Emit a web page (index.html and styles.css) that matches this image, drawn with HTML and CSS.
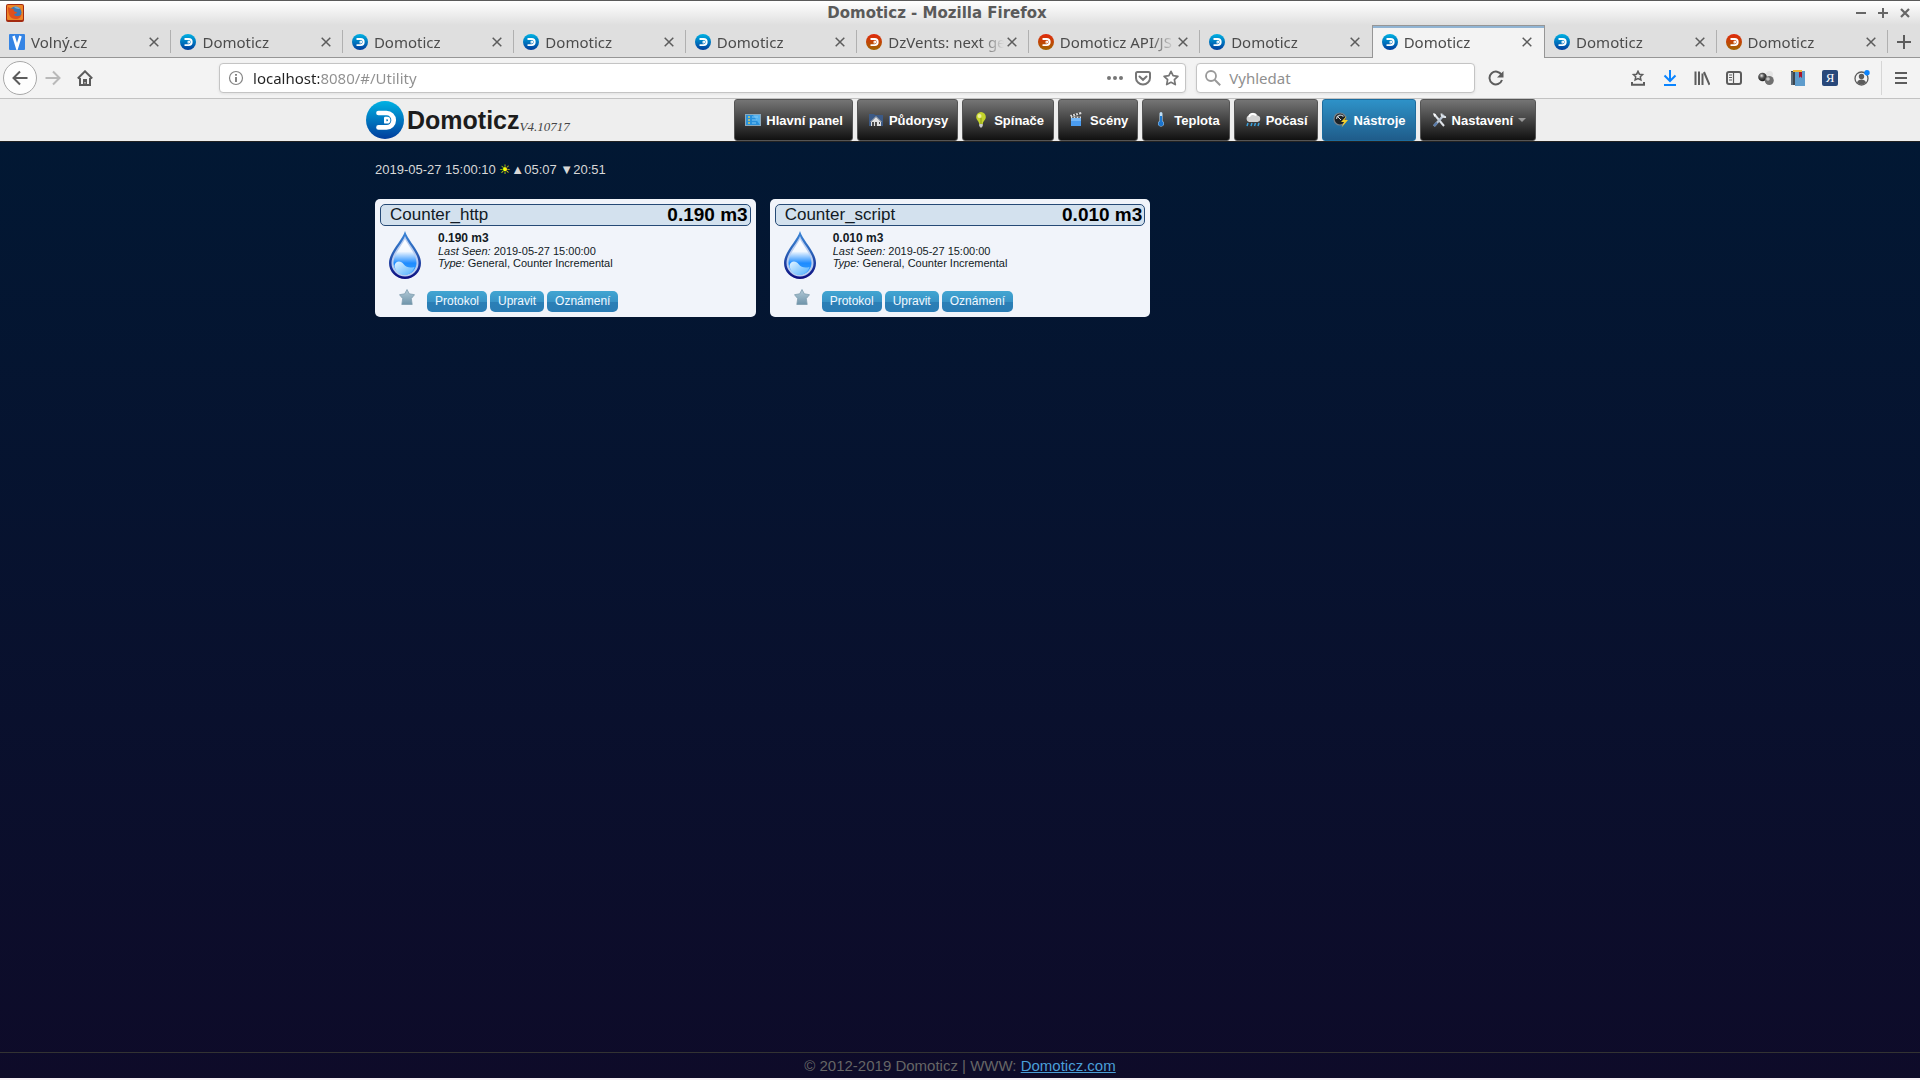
FILE: index.html
```html
<!DOCTYPE html>
<html lang="cs">
<head>
    <meta charset="UTF-8">
    <meta name="viewport" content="width=device-width, initial-scale=1.0">
    <title>Domoticz</title>
    <link rel="stylesheet" href="styles.css">
</head>
<body>
    <!-- Shared icons -->
    <svg class="sprite" width="0" height="0" aria-hidden="true">
        <defs>
            <linearGradient id="blueFill" x1="0" y1="0" x2="0" y2="1"><stop offset="0" stop-color="#00b2e3"/><stop offset="1" stop-color="#003c9c"/></linearGradient>
            <linearGradient id="redFill" x1="0" y1="0" x2="0" y2="1"><stop offset="0" stop-color="#e2280c"/><stop offset="1" stop-color="#a06400"/></linearGradient>
            <linearGradient id="dropRim" x1="0" y1="0" x2="0" y2="1"><stop offset="0" stop-color="#3a86d8"/><stop offset="0.45" stop-color="#2b62b8"/><stop offset="1" stop-color="#0c0c80"/></linearGradient>
            <linearGradient id="dropFill" x1="0" y1="0" x2="0" y2="1"><stop offset="0" stop-color="#ffffff"/><stop offset="0.35" stop-color="#f2f8ff"/><stop offset="0.68" stop-color="#1e8cff"/><stop offset="1" stop-color="#35a0ff"/></linearGradient>
            <linearGradient id="waveFill" x1="0" y1="0" x2="1" y2="1"><stop offset="0" stop-color="#e4f4ff"/><stop offset="1" stop-color="#4fb0ff"/></linearGradient>
            <linearGradient id="starFill" x1="0" y1="0" x2="0" y2="1"><stop offset="0" stop-color="#b4cbd8"/><stop offset="1" stop-color="#6f94aa"/></linearGradient>
            <radialGradient id="ballFill" cx="0.4" cy="0.35" r="0.7"><stop offset="0" stop-color="#e8e8e8"/><stop offset="0.4" stop-color="#555"/><stop offset="1" stop-color="#111"/></radialGradient>
        </defs>
        <symbol id="mark" viewBox="0 0 38 38">
            <path d="M12.500 12H20.500a7.200 7.200 0 0 1 0 14.400h-8" fill="none" stroke="#fff" stroke-width="4.700" stroke-linecap="round"/>
            <path d="M19.200 17h1.800a2.200 2.200 0 0 1 0 4.400h-1.800z" fill="none" stroke="#fff" stroke-width="2.400" stroke-linejoin="round"/>
        </symbol>
        <symbol id="blue" viewBox="0 0 38 38"><circle cx="19" cy="19" r="19" fill="url(#blueFill)"/><use href="#mark"/></symbol>
        <symbol id="red" viewBox="0 0 38 38"><circle cx="19" cy="19" r="19" fill="url(#redFill)"/><use href="#mark"/></symbol>
        <symbol id="close" viewBox="0 0 10 10"><path d="M.7.7l8.600 8.600M9.300.7L.7 9.300" stroke="#5c5c5c" stroke-width="1.500"/></symbol>
        <symbol id="drop" viewBox="0 0 32 48">
            <path d="M16 0C13 10 0 21 0 32a16 16 0 0 0 32 0C32 21 19 10 16 0z" fill="url(#dropRim)"/>
            <path d="M16 5C13.500 12 2.500 22 2.500 32a13.500 13.500 0 0 0 27 0C29.500 22 18.500 12 16 5z" fill="#b9cdf0"/>
            <path d="M16 8C13.500 14 4.500 23 4.500 32a11.500 11.500 0 0 0 23 0C27.500 23 18.500 14 16 8z" fill="url(#dropFill)"/>
            <path d="M5.500 35c1-6 7-5 9-2 3 4 7 4 11 3-1 4-5 8-10 8s-9-3-10-9z" fill="url(#waveFill)"/>
        </symbol>
        <symbol id="star" viewBox="0 0 16 16"><path d="M8 .5l2.300 4.300 5.200.9-3.200 3.900.9 5.900H2.800l.9-5.900L.5 5.700l5.200-.9z" fill="url(#starFill)" stroke="#7f9dae" stroke-width=".8"/></symbol>
    </svg>

    <!-- Browser window -->
    <div class="titlebar">
        <svg class="app-icon" viewBox="0 0 18 18"><rect width="18" height="18" rx="2" fill="#a32a10"/><rect x="1" y="1" width="16" height="15" rx="1" fill="#ee8526"/><circle cx="9.500" cy="8.500" r="6" fill="#3d78b4"/><path d="M2 3c0 8 2 12 8 12 3 0 5-2 6-5-3 3-7 3-8 0 2 0 3-1 3-2-3 0-4-2-3-3C5 5 4 4 2 3z" fill="#e0501c"/><path d="M8 3c2-1 5 0 6 2-2 0-4 0-6-2z" fill="#76a9cf"/></svg>
        <span class="window-title">Domoticz - Mozilla Firefox</span>
        <div class="window-buttons">
            <button aria-label="Minimalizovat"><svg viewBox="0 0 10 10"><path d="M0 5h10" stroke="#666" stroke-width="2"/></svg></button>
            <button aria-label="Maximalizovat"><svg viewBox="0 0 10 10"><path d="M0 5h10M5 0v10" stroke="#666" stroke-width="2"/></svg></button>
            <button aria-label="Zavřít"><svg viewBox="0 0 10 10"><path d="M1 1l8 8M9 1L1 9" stroke="#666" stroke-width="2.200"/></svg></button>
        </div>
    </div>

    <div class="tabs">
        <div class="tab"><button class="tab-name"><svg viewBox="0 0 16 16"><rect width="16" height="16" rx="1" fill="#3584e4"/><path d="M4.500 2L8 13.500 11.500 2" fill="none" stroke="#fff" stroke-width="2.600"/></svg><span>Volný.cz</span></button><button class="tab-close" aria-label="Zavřít panel"><svg><use href="#close"/></svg></button></div>
        <div class="tab"><button class="tab-name"><svg><use href="#blue"/></svg><span>Domoticz</span></button><button class="tab-close" aria-label="Zavřít panel"><svg><use href="#close"/></svg></button></div>
        <div class="tab"><button class="tab-name"><svg><use href="#blue"/></svg><span>Domoticz</span></button><button class="tab-close" aria-label="Zavřít panel"><svg><use href="#close"/></svg></button></div>
        <div class="tab"><button class="tab-name"><svg><use href="#blue"/></svg><span>Domoticz</span></button><button class="tab-close" aria-label="Zavřít panel"><svg><use href="#close"/></svg></button></div>
        <div class="tab"><button class="tab-name"><svg><use href="#blue"/></svg><span>Domoticz</span></button><button class="tab-close" aria-label="Zavřít panel"><svg><use href="#close"/></svg></button></div>
        <div class="tab"><button class="tab-name"><svg><use href="#red"/></svg><span>DzVents: next ge</span></button><button class="tab-close" aria-label="Zavřít panel"><svg><use href="#close"/></svg></button></div>
        <div class="tab"><button class="tab-name"><svg><use href="#red"/></svg><span>Domoticz API/JS</span></button><button class="tab-close" aria-label="Zavřít panel"><svg><use href="#close"/></svg></button></div>
        <div class="tab before-active"><button class="tab-name"><svg><use href="#blue"/></svg><span>Domoticz</span></button><button class="tab-close" aria-label="Zavřít panel"><svg><use href="#close"/></svg></button></div>
        <div class="tab active"><button class="tab-name"><svg><use href="#blue"/></svg><span>Domoticz</span></button><button class="tab-close" aria-label="Zavřít panel"><svg><use href="#close"/></svg></button></div>
        <div class="tab"><button class="tab-name"><svg><use href="#blue"/></svg><span>Domoticz</span></button><button class="tab-close" aria-label="Zavřít panel"><svg><use href="#close"/></svg></button></div>
        <div class="tab"><button class="tab-name"><svg><use href="#red"/></svg><span>Domoticz</span></button><button class="tab-close" aria-label="Zavřít panel"><svg><use href="#close"/></svg></button></div>
        <button class="new-tab" aria-label="Nový panel"><svg viewBox="0 0 14 14"><path d="M0 7h14M7 0v14" stroke="#5c5c5c" stroke-width="2"/></svg></button>
    </div>

    <div class="toolbar">
        <button class="back" aria-label="Zpět"><svg viewBox="0 0 16 16"><path d="M15.500 8H1.500M8 1.500L1.500 8 8 14.500" fill="none" stroke="#5c5c5c" stroke-width="2"/></svg></button>
        <button class="tool" aria-label="Vpřed"><svg viewBox="0 0 16 16"><path d="M.5 8h14M8 1.500L14.500 8 8 14.500" fill="none" stroke="#b9b9b9" stroke-width="2"/></svg></button>
        <button class="tool" aria-label="Domů"><svg viewBox="0 0 16 16"><path d="M.8 8.500L8 1.300l7.200 7.200M3 8v7h10V8" fill="none" stroke="#5c5c5c" stroke-width="2"/><path d="M6 15V9h4v6z" fill="#5c5c5c"/><path d="M7.500 12h1v1.500h-1z" fill="#f3f3f3"/></svg></button>
        <span class="spacer"></span>
        <div class="field url">
            <svg viewBox="0 0 16 16"><circle cx="8" cy="8" r="6.500" fill="none" stroke="#858585" stroke-width="1.200"/><path d="M8 7v5M8 4v1.800" stroke="#777" stroke-width="1.800"/></svg>
            <input type="text" value="localhost:8080/#/Utility" aria-label="Adresa">
            <button aria-label="Akce stránky"><svg viewBox="0 0 16 16" fill="#767676"><circle cx="2" cy="8" r="2"/><circle cx="8" cy="8" r="2"/><circle cx="14" cy="8" r="2"/></svg></button>
            <button aria-label="Pocket"><svg viewBox="0 0 16 16" fill="none" stroke="#767676" stroke-width="2"><path d="M2.500 2h11q1.500 0 1.500 1.500V8A7 6.500 0 0 1 1 8V3.500Q1 2 2.500 2z"/><path d="M4.500 6.500L8 9.800l3.500-3.300" stroke-linecap="round"/></svg></button>
            <button aria-label="Přidat do záložek"><svg viewBox="0 0 16 16"><path d="M8 1.300l2.100 4.400 4.800.6-3.500 3.400.9 4.900L8 12.300l-4.300 2.300.9-4.900L1.100 6.300l4.800-.6z" fill="none" stroke="#767676" stroke-width="1.700" stroke-linejoin="round"/></svg></button>
        </div>
        <div class="field search">
            <svg viewBox="0 0 16 16"><circle cx="6" cy="6" r="5" fill="none" stroke="#999" stroke-width="1.800"/><path d="M9.700 9.700l5.500 5.500" stroke="#999" stroke-width="2"/></svg>
            <input type="search" placeholder="Vyhledat" aria-label="Vyhledat">
        </div>
        <button class="tool" aria-label="Obnovit"><svg viewBox="0 0 16 16"><path d="M13.600 5A6.400 6.400 0 1 0 14 10" fill="none" stroke="#5c5c5c" stroke-width="2"/><path d="M15.500 1v6.500H9z" fill="#5c5c5c"/></svg></button>
        <span class="spacer"></span>
        <div class="extensions">
            <button aria-label="Uložit záložku"><svg viewBox="0 0 16 16" fill="none" stroke="#5c5c5c"><path d="M8 1.300l1.400 2.900 3.200.4-2.300 2.200.6 3.200L8 8.500 5.100 10l.6-3.200-2.300-2.200 3.200-.4z" stroke-width="1.500"/><path d="M2 12v2.800h12V12" stroke-width="2"/></svg></button>
            <button aria-label="Stahování"><svg viewBox="0 0 16 16" fill="none" stroke="#0a84ff" stroke-width="2"><path d="M8 0v10.500M2.500 5.500L8 11l5.500-5.500M2 15h12"/></svg></button>
            <button aria-label="Knihovna"><svg viewBox="0 0 16 16" stroke="#5c5c5c" stroke-width="2"><path d="M1.500 1.500V15M5 1.500V15M8.500 3.500V15M10 2l5.500 12.800"/></svg></button>
            <button aria-label="Postranní lišta"><svg viewBox="0 0 16 16" fill="none" stroke="#5c5c5c"><rect x="1" y="2" width="14" height="12" rx="2" stroke-width="2"/><path d="M7.500 2v12M3 5h3M3 7.500h3M3 10h3" stroke-width="1.200"/></svg></button>
            <button aria-label="Doplněk"><svg viewBox="0 0 16 16"><circle cx="11.500" cy="4.500" r="3.500" fill="#e4e4e4"/><circle cx="4.500" cy="7" r="4.300" fill="url(#ballFill)"/><circle cx="11.300" cy="10.500" r="4.500" fill="#707070"/><circle cx="10" cy="9" r="1.800" fill="#c4c4c4"/></svg></button>
            <button aria-label="Slovník"><svg viewBox="0 0 16 16"><path d="M1 1h4v14H1z" fill="#3c4650"/><path d="M5 1h10v15H5z" fill="#5e9ccc"/><path d="M3 0h9v2H3z" fill="#eeb63c"/><path d="M2 2v13" stroke="#8095a5"/><path d="M9 2h3v6l-1.500-1.500L9 8z" fill="#a8142c"/></svg></button>
            <button class="translit" aria-label="Přepis">Я</button>
            <button aria-label="Účet"><svg viewBox="0 0 16 16"><circle cx="7.500" cy="8.500" r="6.500" fill="none" stroke="#5c5c5c" stroke-width="1.300"/><circle cx="7.500" cy="6.500" r="2.700" fill="#5c5c5c"/><path d="M3 12.500c1-4 8-4 9 0-2 2.500-7 2.500-9 0z" fill="#5c5c5c"/><circle cx="13" cy="2.700" r="2.700" fill="#0a84ff"/></svg></button>
            <button class="menu" aria-label="Nabídka"><svg viewBox="0 0 16 16" stroke="#5c5c5c" stroke-width="2"><path d="M2 3h12M2 8h12M2 13h12"/></svg></button>
        </div>
    </div>

    <!-- Domoticz page -->
    <header class="navbar">
        <div class="container">
            <a class="brand" href="#/Dashboard"><svg><use href="#blue"/></svg><span class="brand-name">Domoticz</span><span class="version">V4.10717</span></a>
            <nav>
                <a href="#/Dashboard"><svg viewBox="0 0 16 16"><rect y="2" width="16" height="12" fill="#8aa7ba"/><rect x="1" y="3" width="14" height="10" fill="#2890dc"/><path d="M8 3h7v10z" fill="#56b2ee"/><path d="M3 5h2M3 8h2M3 11h2" stroke="#d4c860" stroke-width="1.500"/><path d="M7 5h6M7 8h5M7 11h4" stroke="#80c9f5"/></svg>Hlavní panel</a>
                <a href="#/Floorplans"><svg viewBox="0 0 16 16"><path d="M1 2h5l1 1h8v11H1z" fill="#3c5a86"/><path d="M3 10l5-5 5 5v4H3z" fill="#e0e0e0"/><path d="M2.500 10L8 4.500l5.500 5.500" fill="none" stroke="#aaa"/><path d="M4 10h2v4H4zM7 10h2v4H7zM11 10h1v2h-1z" fill="#4c4c4c"/></svg>Půdorysy</a>
                <a href="#/LightSwitches"><svg viewBox="0 0 16 16"><path d="M8 0a5 5 0 0 0-4.800 5c0 3 2.800 4 3 7h3.600c.2-3 3-4 3-7A5 5 0 0 0 8 0z" fill="#c4d42c"/><circle cx="6.500" cy="4" r="2" fill="#eef09a"/><path d="M8 6v6" stroke="#8b981a"/><path d="M6.200 12h3.600v2L8 16l-1.800-2z" fill="#c8c8c8"/></svg>Spínače</a>
                <a href="#/Scenes"><svg viewBox="0 0 16 16"><path d="M2 6h10v8H2z" fill="#4a9cf0"/><path d="M2 6h10v3H2z" fill="#76b8f8"/><path d="M1 3l11-3 .5 2L2 5zM2 4.500h10v1.500H2z" fill="#ddd"/><path d="M3 2l1 2M6 1.500l1 2M9 .8l1 2M4 4.500V6M7 4.500V6M10 4.500V6" stroke="#333" stroke-width="1.200"/></svg>Scény</a>
                <a href="#/Temperature"><svg viewBox="0 0 16 16"><path d="M6.500 1.500a1.500 1.500 0 0 1 3 0V9a3 3 0 1 1-3 0z" fill="#bfe0f8"/><path d="M8 4v7" stroke="#1c7ad4" stroke-width="2"/><circle cx="8" cy="11.500" r="2.600" fill="#1c74cc"/></svg>Teplota</a>
                <a href="#/Weather"><svg viewBox="0 0 16 16"><path d="M4 10a3.500 3.500 0 0 1-.5-6.500 5 5 0 0 1 9 0A3.300 3.300 0 0 1 12.500 10z" fill="#d2d2d2"/><path d="M4 5a4 4 0 0 1 7-1.500" stroke="#fff" stroke-width="2" fill="none"/><path d="M3 11l-1 3M7 11l-1 3M10.500 11l-1 3M14 11l-1 3" stroke="#38a0dc" stroke-width="1.500"/></svg>Počasí</a>
                <a class="current" href="#/Utility"><svg viewBox="0 0 16 16"><circle cx="7" cy="7" r="6" fill="#1c2226" stroke="#778088" stroke-width="1.200"/><path d="M3.500 7a4 4 0 0 1 7-2.500" fill="none" stroke="#b6c1c8" stroke-width="1.200"/><path d="M4 4l4 4" stroke="#ddd"/><path d="M13.500 4L8 10h3l-2.500 5.500L15 8h-3.500z" fill="#f4cf2c"/></svg>Nástroje</a>
                <a href="#/Setup"><svg viewBox="0 0 16 16"><path d="M3 2l10 12" stroke="#dfe3e8" stroke-width="2"/><path d="M13 3L3 14" stroke="#b9c6d4" stroke-width="2.400"/><path d="M10.500 1.500c0 3 1.500 4 4.500 3.500" fill="none" stroke="#dce2e8" stroke-width="2"/><path d="M2 1l3 1.500L3.500 5z" fill="#fff"/><path d="M3 14l3-3.400" stroke="#5a7cab" stroke-width="2.400"/></svg>Nastavení<i class="caret"></i></a>
            </nav>
        </div>
    </header>

    <main>
        <p class="clock">2019-05-27 15:00:10 <span class="sun">☀</span>▲05:07 ▼20:51</p>
        <div class="devices">
            <article class="device">
                <header><h2>Counter_http</h2><strong>0.190 m3</strong></header>
                <div class="details">
                    <svg class="drop"><use href="#drop"/></svg>
                    <div>
                        <p class="status">0.190 m3</p>
                        <p><em>Last Seen:</em> 2019-05-27 15:00:00</p>
                        <p><em>Type:</em> General, Counter Incremental</p>
                    </div>
                </div>
                <div class="actions">
                    <button class="favourite" aria-label="Oblíbené"><svg><use href="#star"/></svg></button>
                    <a href="#/Devices/1/Log">Protokol</a>
                    <a href="#/Devices/1/Edit">Upravit</a>
                    <a href="#/Devices/1/Notifications">Oznámení</a>
                </div>
            </article>
            <article class="device">
                <header><h2>Counter_script</h2><strong>0.010 m3</strong></header>
                <div class="details">
                    <svg class="drop"><use href="#drop"/></svg>
                    <div>
                        <p class="status">0.010 m3</p>
                        <p><em>Last Seen:</em> 2019-05-27 15:00:00</p>
                        <p><em>Type:</em> General, Counter Incremental</p>
                    </div>
                </div>
                <div class="actions">
                    <button class="favourite" aria-label="Oblíbené"><svg><use href="#star"/></svg></button>
                    <a href="#/Devices/2/Log">Protokol</a>
                    <a href="#/Devices/2/Edit">Upravit</a>
                    <a href="#/Devices/2/Notifications">Oznámení</a>
                </div>
            </article>
        </div>
    </main>

    <footer>© 2012-2019 Domoticz | WWW: <a href="#domoticz">Domoticz.com</a></footer>
</body>
</html>
```
FILE: styles.css
```css
* {
    box-sizing: border-box;
}
body {
    margin: 0;
    min-height: 100vh;
    display: flex;
    flex-direction: column;
    font-family: "Liberation Sans", Arial, sans-serif;
    background: linear-gradient(#001a35, #0e0b29);
    border-bottom: 2px solid #f6f0f6;
}
button {
    padding: 0;
    border: none;
    background: none;
    font-family: inherit;
    display: flex;
    align-items: center;
    justify-content: center;
}
p, h2 {
    margin: 0;
}
svg {
    display: block;
    flex: none;
    width: 16px;
    height: 16px;
}
.sprite {
    position: absolute;
    width: 0;
    height: 0;
}

/* Window title */
.titlebar {
    display: grid;
    grid-template-columns: 1fr auto 1fr;
    align-items: center;
    height: 25px;
    padding: 0 10px 1px 6px;
    border-top: 1px solid #5a5a5a;
    background: linear-gradient(#fff, #dfdfdf);
}
.app-icon {
    width: 18px;
    height: 18px;
}
.window-title {
    font: bold 15px "DejaVu Sans", sans-serif;
    color: #5a5a5a;
    padding-right: 42px;
}
.window-buttons {
    display: flex;
    justify-content: flex-end;
    gap: 12px;
}
.window-buttons svg, .tab-close svg {
    width: 10px;
    height: 10px;
}

/* Browser tabs */
.tabs {
    display: flex;
    height: 33px;
    background: #dfdfdf;
    box-shadow: inset 0 -1px #969696;
}
.tab {
    flex: 1;
    min-width: 0;
    display: flex;
    align-items: center;
    padding: 0 10px 0 9px;
    background: linear-gradient(#b0b0b0, #b0b0b0) right 5px / 1px 23px no-repeat;
}
.tab.before-active {
    background: none;
}
.tab.active {
    background: #f3f3f3;
    border: 1px solid #969696;
    border-bottom: none;
    box-shadow: inset 0 2px #91b4d3;
}
.tab-name {
    flex: 1;
    min-width: 0;
    justify-content: flex-start;
    gap: 6px;
    overflow: hidden;
}
.tab-name span {
    flex: 1;
    overflow: hidden;
    text-align: left;
    white-space: nowrap;
    font: 15px/22px "Noto Sans", sans-serif;
    color: #4c4c4c;
    mask-image: linear-gradient(to left, transparent, #000 24px);
}
.tab-close {
    padding: 4px 2px 4px 3px;
}
.new-tab {
    width: 32px;
}
.new-tab svg {
    width: 14px;
    height: 14px;
}

/* Browser toolbar */
.toolbar {
    display: flex;
    align-items: center;
    height: 41px;
    padding: 0 11px 0 3px;
    background: #f3f3f3;
    border-bottom: 1px solid #c2c2c2;
}
.back {
    width: 34px;
    height: 34px;
    border: 1px solid #a8a8a8;
    border-radius: 50%;
    background: #fdfdfd;
}
.tool {
    width: 32px;
    height: 32px;
}
.spacer {
    flex: 120;
}
.field {
    display: flex;
    align-items: center;
    gap: 12px;
    height: 30px;
    padding: 0 6px 0 8px;
    border: 1px solid #c4c4c4;
    border-radius: 4px;
    background: #fff;
    box-shadow: 0 1px 3px rgba(0, 0, 0, 0.08);
}
.url {
    flex: 967;
    margin-right: 10px;
}
.url > svg {
    margin-right: -3px;
}
.search {
    flex: 267;
    gap: 8px;
    margin-right: 5px;
}
.field input {
    flex: 1;
    min-width: 0;
    padding: 0;
    border: none;
    outline: none;
    background: none;
    font: 15px/22px "Noto Sans", sans-serif;
    color: #8f8f8f;
}
.url input {
    color: transparent;
    background: linear-gradient(to right, #222 66px, #8f8f8f 66px);
    background-clip: text;
}
.field input::placeholder {
    color: #8f8f8f;
    opacity: 1;
}
.extensions {
    display: flex;
    align-items: center;
    gap: 16px;
}
.extensions .translit {
    width: 16px;
    height: 16px;
    border-radius: 2px;
    background: #28487a;
    color: #fff;
    font: 13px/16px "Liberation Serif", serif;
}
.extensions .menu {
    height: 34px;
    padding-left: 11px;
    border-left: 1px solid #d6d6d6;
    margin-left: -5px;
}

/* Domoticz header */
.navbar {
    background: #eee;
    border-bottom: 1px solid #222;
    padding-right: 18px;
}
.container {
    max-width: 1170px;
    margin: 0 auto;
    display: flex;
    justify-content: space-between;
}
.brand {
    display: flex;
    align-items: center;
    color: #1c1c1c;
    text-decoration: none;
}
.brand svg {
    width: 38px;
    height: 38px;
    margin-right: 3px;
}
.brand-name {
    font-size: 25px;
    font-weight: bold;
    line-height: 42px;
}
.version {
    font: italic 13px/16px "Liberation Serif", serif;
    color: #444;
    padding-top: 14px;
}
nav {
    display: flex;
    gap: 4px;
}
nav a {
    display: flex;
    align-items: center;
    gap: 5px;
    height: 42px;
    padding: 0 9px 0 10px;
    border: 1px solid #555;
    border-radius: 3px;
    background: linear-gradient(#757575, #111);
    color: #fff;
    font-size: 13px;
    font-weight: bold;
    text-decoration: none;
}
nav a.current {
    border-color: #1c6c9e;
    background: linear-gradient(#2e92c8, #1f5c8a);
}
.caret {
    border: 4px solid transparent;
    border-top-color: #999;
    border-bottom: none;
}

/* Devices */
main {
    flex: 1;
    width: 100%;
    max-width: 1170px;
    margin: 0 auto;
}
.clock {
    padding: 20px 0 21px;
    font-size: 13px;
    line-height: 16px;
    color: #d8d8d8;
}
.sun {
    color: #ff0;
}
.devices {
    display: grid;
    grid-template-columns: repeat(3, 1fr);
    gap: 14px;
}
.device {
    padding: 5px;
    border-radius: 5px;
    background: #f1f4fa;
    color: #111a24;
}
.device header {
    display: flex;
    align-items: center;
    justify-content: space-between;
    height: 22px;
    padding: 0 2px 0 9px;
    border: 1px solid #264a76;
    border-radius: 5px;
    background: #d3e1ee;
}
.device h2 {
    font-size: 17px;
    font-weight: normal;
}
.device strong {
    font-size: 19px;
    color: #000;
}
.details {
    display: flex;
    gap: 17px;
    padding: 5px 0 0 9px;
    font-size: 11px;
    line-height: 12px;
}
.details .status {
    margin-top: 1px;
    font-size: 12px;
    font-weight: bold;
    line-height: 13px;
}
.drop {
    width: 32px;
    height: 48px;
}
.actions {
    display: flex;
    align-items: flex-start;
    gap: 3px;
    padding: 10px 0 0 19px;
}
.favourite {
    margin-right: 9px;
}
.actions a {
    margin-top: 2px;
    padding: 0 8px;
    border-radius: 5px;
    background: linear-gradient(#42a6d2, #3893c6 50%, #2b7fb6 50%, #2a7cb4);
    color: #f0f8ff;
    font-size: 12px;
    line-height: 21px;
    text-decoration: none;
}

footer {
    padding: 4px 0 3px;
    border-top: 1px solid #333;
    text-align: center;
    font-size: 15px;
    line-height: 18px;
    color: #666;
}
footer a {
    color: #4a9fd8;
}
```
